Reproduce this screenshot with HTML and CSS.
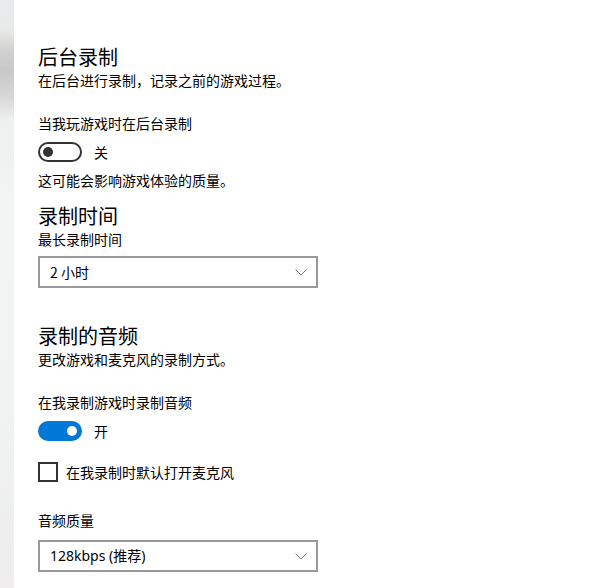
FILE: index.html
```html
<!DOCTYPE html>
<html lang="zh-CN">
<head>
<meta charset="utf-8">
<link rel="stylesheet" href="styles.css">
</head>
<body>
<div class="page">
  <aside class="sidebar"></aside>
  <main class="content">
    <h2 class="title">后台录制</h2>
    <p class="text">在后台进行录制，记录之前的游戏过程。</p>
    <p class="text label gap-l">当我玩游戏时在后台录制</p>
    <div class="toggle-row">
      <span class="toggle off"><span class="knob"></span></span>
      <span class="toggle-label">关</span>
    </div>
    <p class="text gap-s">这可能会影响游戏体验的质量。</p>

    <h2 class="title gap-m">录制时间</h2>
    <p class="text">最长录制时间</p>
    <div class="select gap-xs">
      <span class="select-value">2 小时</span>
      <svg class="chevron" width="12" height="7" viewBox="0 0 12 7"><path d="M0.5 0.5 L6 6 L11.5 0.5" fill="none" stroke="#7a7a7a" stroke-width="1"/></svg>
    </div>

    <h2 class="title gap-xl">录制的音频</h2>
    <p class="text">更改游戏和麦克风的录制方式。</p>
    <p class="text label gap-l">在我录制游戏时录制音频</p>
    <div class="toggle-row">
      <span class="toggle on"><span class="knob"></span></span>
      <span class="toggle-label">开</span>
    </div>
    <label class="check-row">
      <span class="checkbox"></span>
      <span class="check-label">在我录制时默认打开麦克风</span>
    </label>
    <p class="text gap-xl2">音频质量</p>
    <div class="select gap-sel2">
      <span class="select-value latin">128kbps (推荐)</span>
      <svg class="chevron" width="12" height="7" viewBox="0 0 12 7"><path d="M0.5 0.5 L6 6 L11.5 0.5" fill="none" stroke="#7a7a7a" stroke-width="1"/></svg>
    </div>
  </main>
</div>
</body>
</html>
```

FILE: styles.css
```css
html, body {
  margin: 0;
  padding: 0;
  background: #ffffff;
}
body {
  font-family: "Noto Sans CJK SC", "Noto Sans", sans-serif;
  color: #000000;
  width: 614px;
  height: 588px;
  overflow: hidden;
}
.page {
  display: flex;
  height: 588px;
}
.sidebar {
  width: 14px;
  flex: 0 0 14px;
  background: linear-gradient(to bottom,
    #e7ebee 0px,
    #e9e9e8 30px,
    #d2d2d2 50px,
    #c8c8c8 70px,
    #d6d6d6 95px,
    #eeefef 120px,
    #f2f3f3 200px,
    #f1f2f2 400px,
    #eeeeee 540px,
    #efeded 588px);
}
.content {
  flex: 1;
  padding: 44px 0 0 24px;
  display: flex;
  flex-direction: column;
  align-items: flex-start;
}
.title {
  margin: 0;
  font-size: 20px;
  font-weight: 400;
  line-height: 26px;
}
.text {
  margin: 0;
  font-size: 14px;
  line-height: 20px;
}
.gap-s { margin-top: 8px; }
.gap-l { margin-top: 23px; }
.gap-m { margin-top: 13px; }
.gap-xs { margin-top: 7px; }
.gap-xl { margin-top: 35px; }
.gap-xl2 { margin-top: 28px; }
.gap-sel2 { margin-top: 10px; }

.toggle-row {
  display: flex;
  align-items: center;
  margin-top: 9px;
  height: 20px;
}
.toggle {
  box-sizing: border-box;
  width: 44px;
  height: 20px;
  border-radius: 10px;
  display: flex;
  align-items: center;
  padding: 0 3px;
}
.toggle.off {
  border: 2px solid #333333;
  justify-content: flex-start;
}
.toggle.on {
  background: #0078d7;
  border: 2px solid #0078d7;
  justify-content: flex-end;
}
.knob {
  width: 10px;
  height: 10px;
  border-radius: 50%;
  background: #333333;
}
.toggle.on .knob {
  background: #ffffff;
}
.toggle-label {
  margin-left: 12px;
  font-size: 14px;
  line-height: 20px;
}
.check-row {
  display: flex;
  align-items: center;
  margin-top: 21px;
  height: 20px;
}
.checkbox {
  box-sizing: border-box;
  width: 20px;
  height: 20px;
  border: 2px solid #333333;
}
.check-label {
  margin-left: 8px;
  font-size: 14px;
  line-height: 20px;
}
.select {
  box-sizing: border-box;
  width: 280px;
  height: 32px;
  border: 2px solid #999999;
  display: flex;
  align-items: center;
  justify-content: space-between;
  padding: 0 9px 0 10px;
}
.select-value {
  font-size: 14px;
  line-height: 20px;
}
.select-value.latin {
  font-family: "Noto Sans", "Noto Sans CJK SC", sans-serif;
}
.chevron {
  display: block;
}
```
